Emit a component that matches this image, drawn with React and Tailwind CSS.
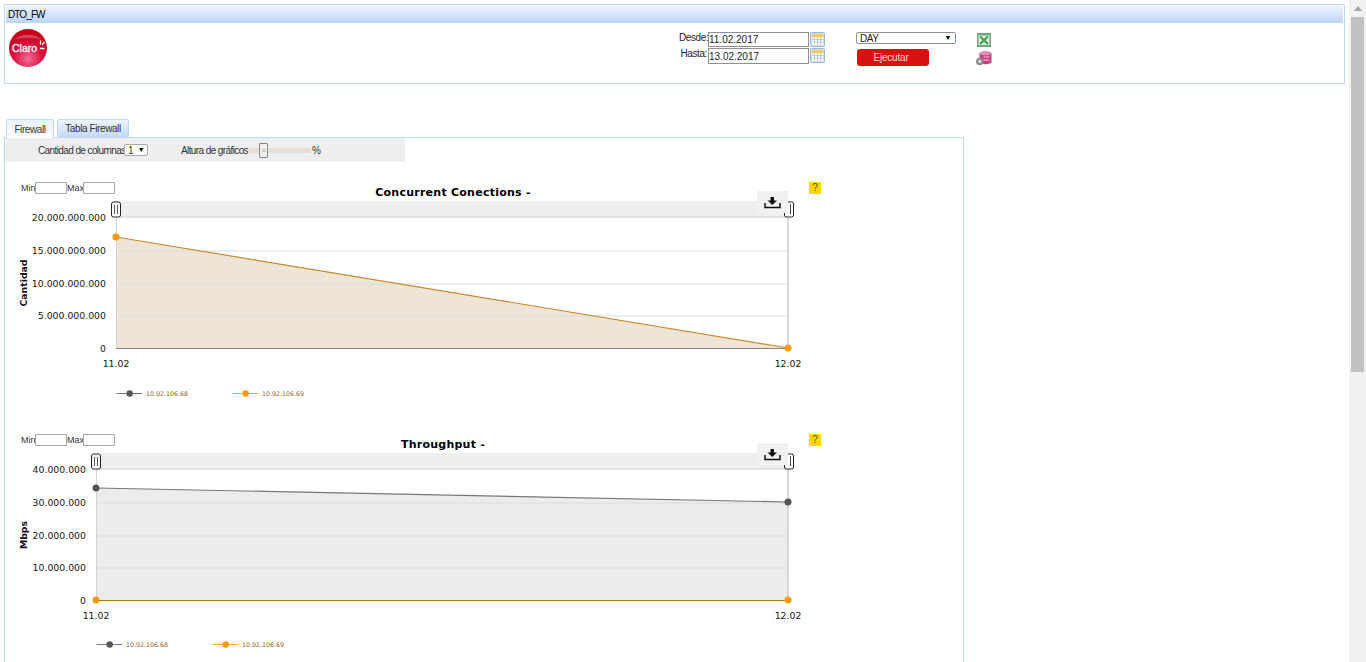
import React from "react";

const charts = [
  {
    title: "Concurrent Conections -",
    titleX: 453,
    yTitle: "Cantidad",
    top: 180,
    left: 116,
    legendY: 393.5,
    leg2: 232.7,
    fill: "#efe5d6",
    ticks: ["20.000.000.000", "15.000.000.000", "10.000.000.000", "5.000.000.000", "0"],
    areaY: 237,
    areaEnd: 348,
    lineColor: "#c98a2e",
    dots: [
      [116, 237, "#f39c12"],
      [788, 348, "#ff9900"],
    ],
    extra: "#8c8478",
  },
  {
    title: "Throughput -",
    titleX: 443,
    yTitle: "Mbps",
    top: 432,
    left: 96,
    legendY: 644.5,
    leg2: 212.7,
    fill: "#ececec",
    ticks: ["40.000.000", "30.000.000", "20.000.000", "10.000.000", "0"],
    areaY: 488,
    areaEnd: 502,
    lineColor: "#777777",
    dots: [
      [96, 488, "#555555"],
      [788, 502, "#555555"],
      [96, 600, "#ff9900"],
      [788, 600, "#ff9900"],
    ],
    extra: "#b9771c",
  },
];

function CalendarIcon() {
  return (
    <svg width="15" height="15" viewBox="0 0 15 15" className="block shrink-0">
      <rect x="0.5" y="0.5" width="14" height="14" rx="1" fill="#d3e2f4" stroke="#9db7d8" />
      <rect x="2" y="2" width="11" height="3" fill="#f0c272" />
      <rect x="2" y="5" width="11" height="8" fill="#fbfbf6" />
      <path d="M4.5 5v8M7.5 5v8M10.5 5v8M2 7.5h11M2 10h11" stroke="#bccbe0" strokeWidth="1" />
    </svg>
  );
}

function ExcelIcon() {
  return (
    <svg width="14" height="14" viewBox="0 0 14 14" className="block">
      <rect x="0" y="0" width="14" height="14" fill="#6fa67c" />
      <rect x="1.500" y="2.500" width="11" height="9.500" fill="#e4efe0" />
      <path d="M3 3.500l8 7.500M11 3.500l-8 7.500" stroke="#3f9a50" strokeWidth="2" />
    </svg>
  );
}

function DbIcon() {
  return (
    <svg width="16" height="15" viewBox="0 0 16 15" className="block">
      <path d="M3.500 2v9c0 1.300 2.700 2.200 6 2.200s6-.9 6-2.200V2z" fill="#c2407f" />
      <ellipse cx="9.500" cy="2.200" rx="6" ry="2.200" fill="#e58ab4" />
      <path d="M7.500 6h6M7.500 9h6" stroke="#f3c2da" strokeWidth="1" />
      <circle cx="3.800" cy="10.500" r="3.800" fill="#8e8e8e" />
      <circle cx="3.800" cy="10.500" r="1.400" fill="#e6e6e6" />
    </svg>
  );
}

function Logo() {
  return (
    <svg width="40" height="40" viewBox="0 0 40 40" className="block tracking-normal">
      <defs>
        <radialGradient id="claro" cx="50%" cy="78%" r="70%">
          <stop offset="0%" stopColor="#f26a94" />
          <stop offset="55%" stopColor="#dc0f3f" />
          <stop offset="100%" stopColor="#c30018" />
        </radialGradient>
      </defs>
      <circle cx="20" cy="20" r="19" fill="url(#claro)" />
      <path d="M7 12c4-7 22-7 26 0-6-3-20-3-26 0z" fill="#ffffff" opacity="0.25" />
      <text x="4" y="24" fontSize="10.500" fill="#ffffff" stroke="#ffffff" strokeWidth="0.3" fontFamily="Liberation Sans, sans-serif">
        Claro
      </text>
      <path d="M32.500 12.500v4M36.500 14l-2.500 3M32 20.500h4.500" stroke="#ffffff" strokeWidth="1.300" />
    </svg>
  );
}

function Chart({ chart }) {
  const { top, left, legendY, leg2 } = chart;
  const off = top - 180;
  const yTicks = [218, 251, 284, 316, 348.5].map((y) => y + off);
  const bottom = yTicks[4];

  return (
    <div className="relative w-[830px] h-[252px]">
      <svg width="830" height="252" viewBox={`5 ${top} 830 252`} className="block tracking-normal">
        {/* navigator */}
        <rect x={left} y={201 + off} width={788 - left} height={17} fill="#eeeeee" />
        <rect x={left} y={216 + off} width={788 - left} height={2} fill="#e2e2e2" />

        {/* area under the first serie */}
        <polygon points={`${left},${chart.areaY} 788,${chart.areaEnd} 788,${bottom} ${left},${bottom}`} fill={chart.fill} />

        {/* grid */}
        {yTicks.slice(1, 4).map((y) => (
          <line key={y} x1={left} x2="788" y1={y} y2={y} stroke="#dcdcdc" />
        ))}
        <line x1={left + 0.5} x2={left + 0.5} y1={218 + off} y2={bottom} stroke="#d3d3d3" />
        <line x1="788" x2="788" y1={218 + off} y2={bottom} stroke="#cfcfcf" strokeWidth="1.500" />

        {/* series */}
        <line x1={left} x2="788" y1={bottom} y2={bottom} stroke={chart.extra} />
        <line x1={left} x2="788" y1={chart.areaY} y2={chart.areaEnd} stroke={chart.lineColor} strokeWidth="1.2" />
        {chart.dots.map(([x, y, c]) => (
          <circle key={`${x}-${y}`} cx={x} cy={y} r="3.500" fill={c} />
        ))}

        {/* title */}
        <text
          x={chart.titleX}
          y={196 + off}
          textAnchor="middle"
          fontSize="11"
          fontWeight="700"
          letterSpacing="0.25"
          fill="#000000"
          fontFamily="DejaVu Sans, sans-serif"
        >
          {chart.title}
        </text>

        {/* y axis */}
        {chart.ticks.map((t, i) => (
          <text
            key={t}
            x={left - 10}
            y={yTicks[i] + 3}
            textAnchor="end"
            fontSize="9.330"
            fill="#1a1a1a"
            fontFamily="DejaVu Sans, sans-serif"
          >
            {t}
          </text>
        ))}
        <text
          transform={`translate(27 ${283 + off}) rotate(-90)`}
          textAnchor="middle"
          fontSize="9.330"
          fontWeight="700"
          fill="#1c0b24"
          fontFamily="DejaVu Sans, sans-serif"
        >
          {chart.yTitle}
        </text>

        {/* x axis */}
        {[
          [left, "11.02"],
          [788, "12.02"],
        ].map(([x, t]) => (
          <text
            key={t}
            x={x}
            y={367 + off}
            textAnchor="middle"
            fontSize="9.330"
            fill="#1a1a1a"
            fontFamily="DejaVu Sans, sans-serif"
          >
            {t}
          </text>
        ))}

        {/* navigator handles */}
        <rect x={left - 4.5} y={202 + off} width="9" height="15" rx="2" fill="#ffffff" stroke="#222222" />
        <path d={`M${left - 1.5} ${205 + off}v9M${left + 1.5} ${205 + off}v9`} stroke="#666666" strokeWidth="1.200" />
        <rect x="784.500" y={202 + off} width="9" height="15" rx="2" fill="#ffffff" stroke="#222222" />
        <path d={`M790.500 ${204 + off}v10`} stroke="#444444" />

        {/* export button */}
        <rect x="757" y={191 + off} width="31" height="22" fill="#f1f1f1" />
        <path d={`M765 ${203 + off}v4.500h15v-4.500`} fill="none" stroke="#111111" strokeWidth="1.500" />
        <path d={`M770.500 ${197 + off}h3.500v3.500h3l-4.700 4.500-4.800-4.500h3z`} fill="#111111" />

        {/* legend */}
        {[
          [left + 0.7, "#555555", "#777777", "10.92.106.68"],
          [leg2, "#ff9900", "#ffa726", "10.92.106.69"],
        ].map(([x, dot, stroke, label]) => (
          <g key={label}>
            <line x1={x} x2={x + 25.5} y1={legendY} y2={legendY} stroke={stroke} />
            <circle cx={x + 13} cy={legendY} r="3.200" fill={dot} />
            <text x={x + 29.3} y={legendY + 2.300} fontSize="6.300" fill="#8a5a30" fontFamily="DejaVu Sans, sans-serif">
              {label}
            </text>
          </g>
        ))}
      </svg>

      {/* min / max inputs sit over the chart */}
      <div className="absolute left-[16px] top-[2px] h-[12px] flex items-center text-[9px] tracking-normal leading-[12px] text-[#333333]">
        <span className="w-[14px]">Min</span>
        <input className="w-[32px] h-[12px] border border-[#a9a9a9] bg-white" />
        <span className="w-[16px]">Max</span>
        <input className="w-[32px] h-[12px] border border-[#a9a9a9] bg-white" />
      </div>
      <div className="absolute left-[804px] top-[2px] w-[12px] h-[12px] bg-[#ffd700] flex items-center justify-center text-[10px] tracking-normal leading-none text-[#555500]">
        ?
      </div>
    </div>
  );
}

export default function App() {
  return (
    <div className="h-[662px] overflow-hidden flex bg-white text-[10px] tracking-[-0.4px] whitespace-nowrap text-[#222222] font-['Liberation_Sans',Arial,sans-serif]">
      <div className="w-[1349px] shrink-0 pl-[4px] pt-[4px]">
        {/* header */}
        <div className="w-[1341px] h-[80px] border border-[#c3d9f7] p-px">
          <div className="h-[17px] px-[2px] flex items-center text-black tracking-[-0.9px] bg-gradient-to-b from-[#ecf3fd] to-[#bcd5f7]">
            DTO_FW
          </div>
          <div className="flex">
            <div className="w-[673px] shrink-0 pl-[2px] pt-[5px]">
              <Logo />
            </div>
            <div className="pt-[9px] flex flex-col gap-px w-[146px] shrink-0">
              <div className="flex items-start h-[15px]">
                <span className="w-[29px] shrink-0 pr-px text-right leading-[11px]">Desde:</span>
                <input
                  readOnly
                  value="11.02.2017"
                  className="w-[101px] shrink-0 h-[15px] border border-[#8f8f8f] text-[10px] tracking-normal bg-white px-0"
                />
                <span className="ml-px">
                  <CalendarIcon />
                </span>
              </div>
              <div className="flex items-start h-[16px]">
                <span className="w-[29px] shrink-0 pr-px text-right leading-[11px]">Hasta:</span>
                <input
                  readOnly
                  value="13.02.2017"
                  className="w-[101px] shrink-0 h-[16px] border border-[#8f8f8f] text-[10px] tracking-normal bg-white px-0"
                />
                <span className="ml-px">
                  <CalendarIcon />
                </span>
              </div>
            </div>
            <div className="ml-[31px] pt-[9px] w-[120px] shrink-0">
              <div className="w-[100px] h-[12px] border border-[#8f8f8f] rounded-[2px] flex items-center justify-between pl-[3px] pr-[4px]">
                <span>DAY</span>
                <span className="text-[7px] text-black">▼</span>
              </div>
              <div className="mt-[5px] ml-px w-[72px] h-[17px] pr-[4px] rounded-[3px] bg-[#d81010] text-[#f6d9d9] flex items-center justify-center text-[10px] tracking-[-0.2px]">
                Ejecutar
              </div>
            </div>
            <div className="pt-[10px] flex flex-col items-start gap-[4px]">
              <span className="ml-px block h-[14px]">
                <ExcelIcon />
              </span>
              <span className="block h-[15px]">
                <DbIcon />
              </span>
            </div>
          </div>
        </div>

        {/* tabs */}
        <div className="mt-[35px] ml-[2px] flex items-end gap-[3px] h-[18px] text-[#333333]">
          <div className="relative z-10 -mb-px w-[48px] h-[19px] pt-px border border-[#c3d9f7] border-b-0 rounded-t-[2px] bg-gradient-to-b from-[#eaf2fd] to-white flex items-center justify-center">
            Firewall
          </div>
          <div className="w-[72px] h-[18px] pt-px border border-[#c3d9f7] rounded-t-[2px] bg-gradient-to-b from-[#eef4fd] to-[#c6dbf8] flex items-center justify-center">
            Tabla Firewall
          </div>
        </div>

        {/* panel */}
        <div className="w-[960px] h-[600px] border border-[#c3d9f7] border-b-0">
          <div className="w-[400px] h-[24px] bg-[#eeeeee] flex items-center text-[#333333] tracking-[-0.6px]">
            <span className="ml-[33px] w-[86px]">Cantidad de columnas</span>
            <div className="w-[24px] h-[12px] border border-[#a9a9a9] bg-white rounded-[2px] flex items-center justify-between pl-[3px] pr-[3px] text-[10px]">
              <span>1</span>
              <span className="text-[7px] text-black">▼</span>
            </div>
            <span className="ml-[33px] w-[67px]">Altura de gráficos</span>
            <div className="relative w-[63px] h-[5px] bg-[#e3dfd8]">
              <div className="absolute left-[11px] -top-[5px] w-[9px] h-[15px] border border-[#8f8a80] bg-[#eeeeee] rounded-[1px] flex items-center justify-center pt-[3px] text-[7px] text-[#8f8a80]">
                =
              </div>
            </div>
            <span className="ml-px">%</span>
          </div>
          <div className="pt-[18px]">
            {charts.map((c) => (
              <Chart key={c.title} chart={c} />
            ))}
          </div>
        </div>
      </div>

      {/* scrollbar */}
      <div className="w-[17px] h-full bg-[#f1f1f1] flex flex-col">
        <div className="h-[17px] flex items-center justify-center">
          <svg width="8" height="5" viewBox="0 0 8 5">
            <path d="M4 0l4 5H0z" fill="#a3a3a3" />
          </svg>
        </div>
        <div className="w-[13px] mx-auto h-[355px] bg-[#c1c1c1]" />
      </div>
    </div>
  );
}
